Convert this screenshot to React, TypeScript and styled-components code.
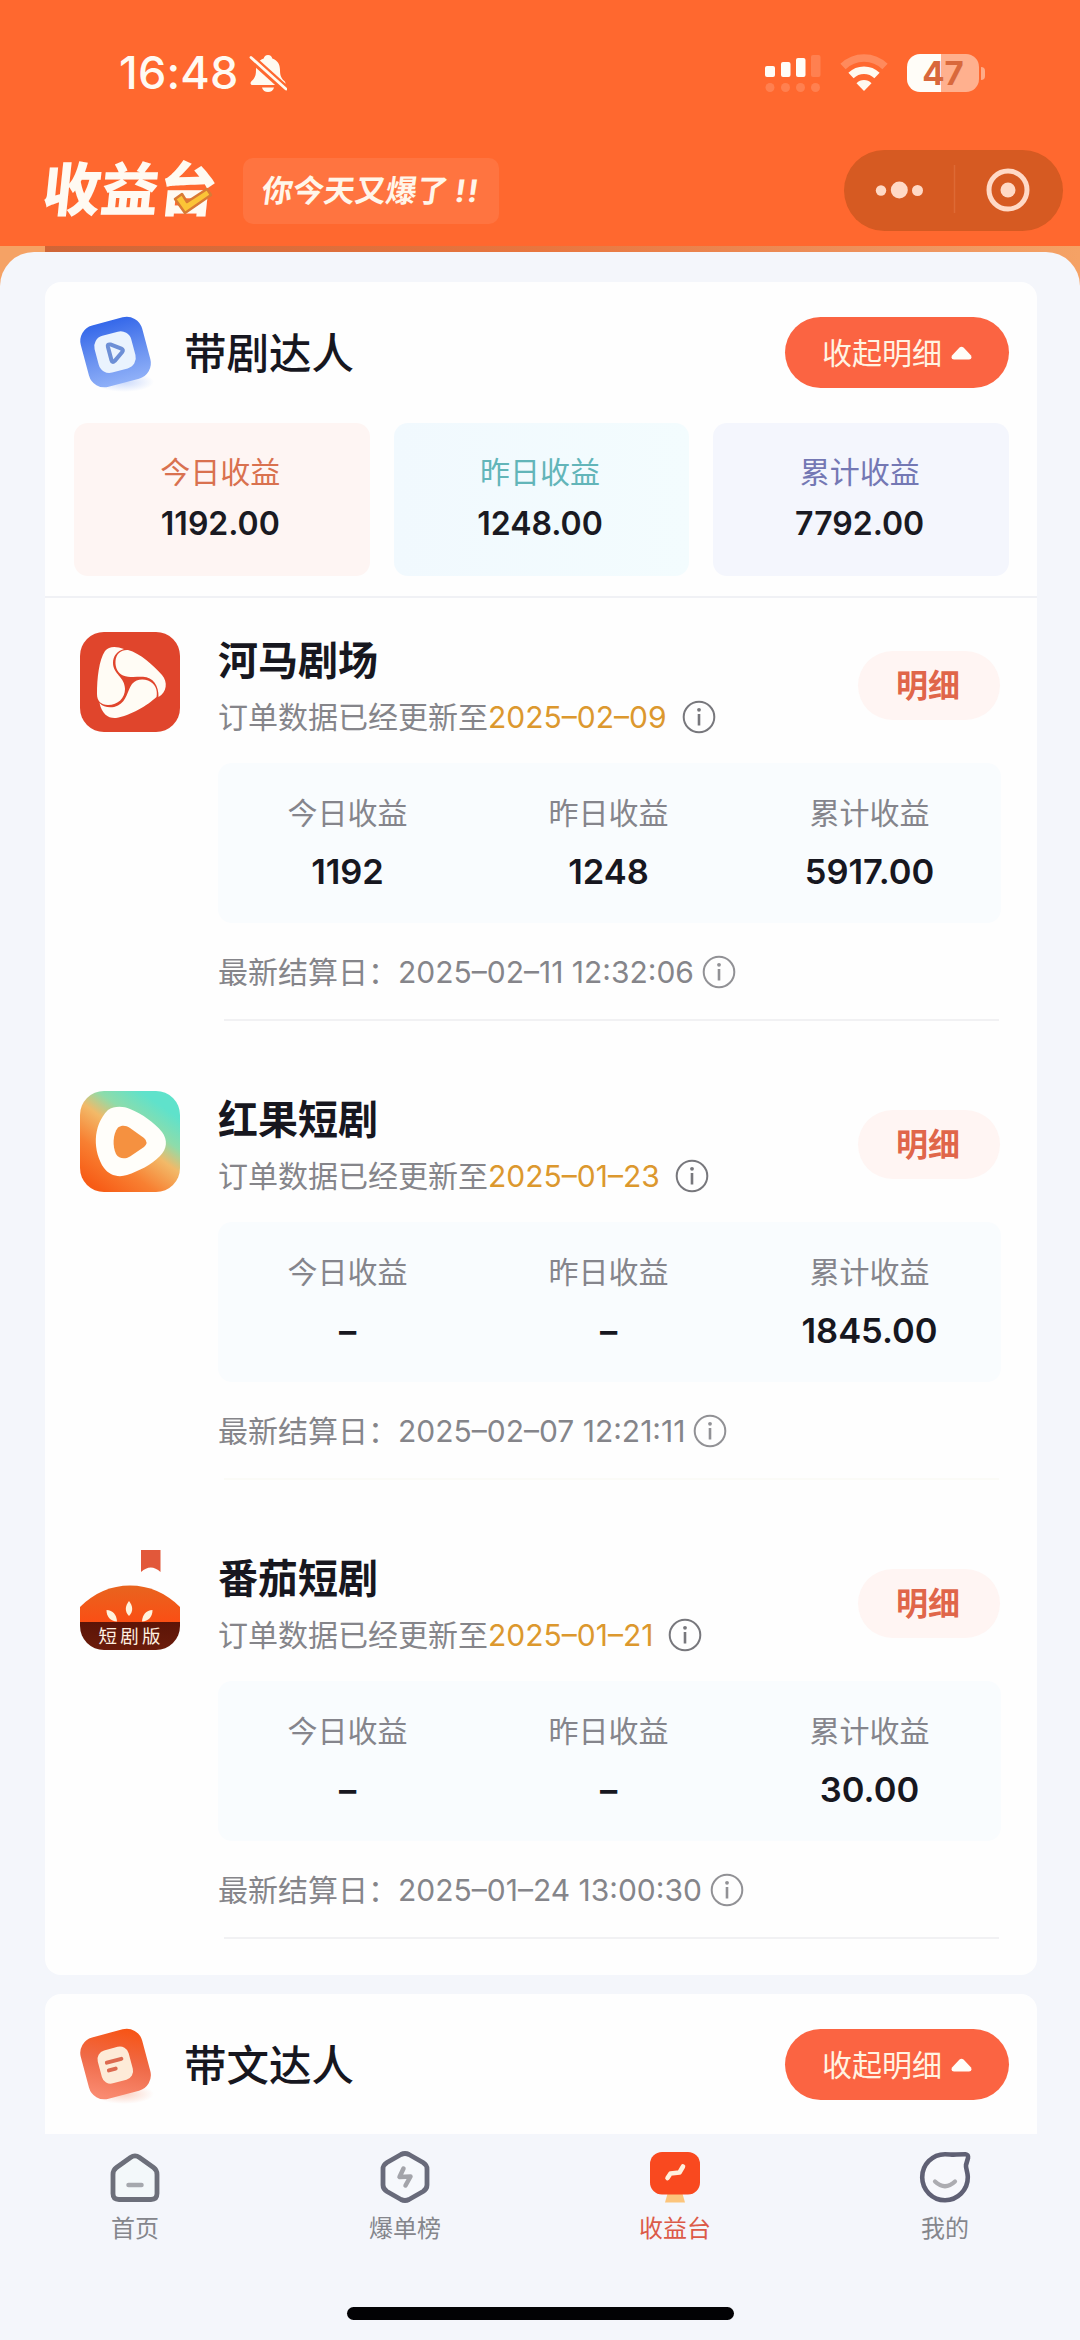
import React from "react";
import styled, { createGlobalStyle } from "styled-components";

const GlobalStyle = createGlobalStyle`
  * { box-sizing: border-box; }
  body {
    margin: 0;
    background: #f4f6fb;
    font-family: Inter, "Noto Sans CJK SC", sans-serif;
    color: #17171f;
  }
  svg { display: block; flex: none; }
`;

const Page = styled.div`
  width: 1080px;
  height: 2340px;
  display: flex;
  flex-direction: column;
  overflow: hidden;
  background: #f4f6fb;
`;

const Header = styled.header`
  height: 246px;
  flex: none;
  background: #ff682f;
`;

const StatusBar = styled.div`
  height: 150px;
  padding: 52px 95px 0 119px;
  display: flex;
  justify-content: space-between;
  align-items: flex-start;
`;

const StatusGroup = styled.div<{ $gap: number }>`
  display: flex;
  align-items: center;
  gap: ${(p) => p.$gap}px;
  height: 42px;
`;

const Clock = styled.span`
  font-size: 45px;
  line-height: 44px;
  font-weight: 500;
  color: #fffaf3;
  width: 121px;
  letter-spacing: 0.2px;
`;

const Battery = styled.div`
  display: flex;
  align-items: center;
  gap: 2px;
`;

const BatteryBody = styled.div`
  width: 72px;
  height: 38px;
  border-radius: 13px;
  display: flex;
  align-items: center;
  justify-content: center;
  background: linear-gradient(90deg, #fffdf8 47%, #ffb08e 47%);
  font-size: 33px;
  line-height: 38px;
  font-weight: 700;
  color: #d9683c;
`;

const BatteryNub = styled.div`
  width: 4px;
  height: 13px;
  border-radius: 0 5px 5px 0;
  background: #ffab87;
`;

const TitleBar = styled.div`
  height: 81px;
  padding: 0 17px 0 43px;
  display: flex;
  align-items: center;
`;

const Logo = styled.div`
  position: relative;
  width: 172px;
  font-size: 58px;
  line-height: 81px;
  font-weight: 900;
  color: #fffaf2;
  white-space: nowrap;
`;

const Slanted = styled.span<{ $angle: number }>`
  display: inline-block;
  transform: skewX(${(p) => -p.$angle}deg);
`;

const LogoCheck = styled.svg`
  position: absolute;
  left: 130px;
  top: 37px;
`;

const Slogan = styled.div`
  width: 256px;
  height: 66px;
  margin-left: 28px;
  border-radius: 10px;
  background: #ff7440;
  font-size: 31px;
  line-height: 65px;
  font-weight: 700;
  color: #fff6ea;
  text-align: center;
  white-space: nowrap;
`;

const Bang = styled.span`
  letter-spacing: 2px;
`;

const Capsule = styled.div`
  width: 219px;
  height: 81px;
  margin-left: auto;
  border-radius: 41px;
  background: #d65a22;
  display: flex;
  align-items: center;
`;

const Backdrop = styled.div`
  flex: 1;
  min-height: 0;
  padding-top: 6px;
  display: flex;
  background: linear-gradient(90deg, #f5a265 45px, #cf6537 45px, #e8763f 50%, #ee9560 85%, #f5a265 100%);
`;

const Sheet = styled.main`
  flex: 1;
  min-height: 0;
  display: flex;
  flex-direction: column;
  border-radius: 34px 34px 0 0;
  background: #f4f6fb;
  padding: 30px 43px 0 45px;
  gap: 19px;
`;

const Card = styled.section<{ $height: number; $cut?: boolean }>`
  height: ${(p) => p.$height}px;
  flex: none;
  border-radius: ${(p) => (p.$cut ? "16px 16px 0 0" : "16px")};
  background: #fefefe;
`;

const CardHead = styled.div`
  height: 141px;
  padding: 0 28px 0 29px;
  display: flex;
  align-items: center;
`;

const CardTitle = styled.h2`
  margin: 0 auto 0 28px;
  padding-top: 3px;
  font-size: 42.5px;
  line-height: 60px;
  font-weight: 500;
`;

const ToggleButton = styled.button`
  width: 224px;
  height: 71px;
  border: 0;
  padding: 0;
  border-radius: 36px;
  background: #fb6442;
  color: #fff3e2;
  font: 400 30px/70px Inter, "Noto Sans CJK SC", sans-serif;
  display: flex;
  align-items: center;
  justify-content: center;
  gap: 9px;
`;

const TileRow = styled.div`
  display: grid;
  grid-template-columns: repeat(3, 1fr);
  gap: 24px;
  padding: 0 28px 20px 29px;
  border-bottom: 2px solid #f0f1f5;
`;

const Tile = styled.div<{ $bg: string; $color: string }>`
  height: 153px;
  border-radius: 14px;
  background: ${(p) => p.$bg};
  display: flex;
  flex-direction: column;
  align-items: center;
  padding: 26px 3px 0 0;
  gap: 7px;
  color: ${(p) => p.$color};
`;

const TileLabel = styled.span`
  font-size: 30px;
  line-height: 46px;
`;

const TileValue = styled.span`
  font-size: 32px;
  line-height: 44px;
  font-weight: 600;
  color: #1a1a22;
`;

const AppItem = styled.article`
  height: 459px;
  display: grid;
  grid-template-columns: 100px 1fr;
  column-gap: 38px;
  padding: 34px 36px 0 35px;
`;

const AppBody = styled.div`
  display: flex;
  flex-direction: column;
`;

const AppTop = styled.div`
  display: flex;
  justify-content: space-between;
  height: 131px;
`;

const AppName = styled.h3`
  margin: 0;
  padding-top: 1px;
  font-size: 40px;
  line-height: 56px;
  font-weight: 700;
`;

const Line = styled.div<{ $gap: number }>`
  display: flex;
  align-items: center;
  gap: ${(p) => p.$gap}px;
  font-size: 30px;
  line-height: 44px;
  color: #85858a;
  white-space: nowrap;
`;

const SubLine = styled(Line)`
  margin-top: 6px;
`;

const DateText = styled.span`
  color: #dc982e;
`;

const DetailButton = styled.button`
  width: 142px;
  height: 69px;
  margin: 19px 1px 0 0;
  padding: 0 2px 0 0;
  border: 0;
  border-radius: 35px;
  background: #fff5f3;
  color: #e0664a;
  font: 700 32px/69px Inter, "Noto Sans CJK SC", sans-serif;
`;

const StatBox = styled.div`
  height: 160px;
  border-radius: 14px;
  background: #f9fcfe;
  display: grid;
  grid-template-columns: repeat(3, 1fr);
`;

const Stat = styled.div`
  display: flex;
  flex-direction: column;
  align-items: center;
  padding: 27px 2px 0 0;
  gap: 13px;
`;

const StatLabel = styled.span`
  font-size: 30px;
  line-height: 46px;
  color: #85858c;
`;

const StatValue = styled.span`
  font-size: 34.5px;
  line-height: 46px;
  font-weight: 600;
`;

const Settle = styled(Line)`
  margin-top: 27px;
  height: 44px;
`;

const Rule = styled.div<{ $faint?: boolean }>`
  height: 2px;
  margin: 25px 2px 0 6px;
  background: ${(p) => (p.$faint ? "#fbfbf7" : "#f1f1f3")};
`;

const TabBar = styled.nav`
  height: 206px;
  flex: none;
  background: #f4f6fb;
  display: flex;
  flex-direction: column;
  align-items: center;
  justify-content: space-between;
  padding-bottom: 20px;
`;

const Tabs = styled.div`
  width: 100%;
  display: grid;
  grid-template-columns: repeat(4, 1fr);
`;

const Tab = styled.div<{ $active?: boolean }>`
  display: flex;
  flex-direction: column;
  align-items: center;
  padding-top: 16px;
  gap: 7px;
  font-size: 24px;
  line-height: 36px;
  color: ${(p) => (p.$active ? "#dc5a48" : "#85868c")};
`;

const HomeIndicator = styled.div`
  width: 387px;
  height: 13px;
  border-radius: 7px;
  background: #020204;
`;

const BellOff = () => (
  <svg width="38" height="39" viewBox="0 0 38 39">
    <path
      d="M19 1c-2.4 0-4 1.500-4.300 3.600C9.500 6.200 7 10.600 7 16c0 6-1.500 8.500-4.600 11.300-1.500 1.500-1 3.700 1.200 3.700h30.800c2.200 0 2.700-2.200 1.200-3.700C32.500 24.500 31 22 31 16c0-5.400-2.500-9.800-7.700-11.400C23 2.500 21.400 1 19 1z"
      fill="#fffaf0"
    />
    <path d="M13 33.500h12c-.8 3-3 4.500-6 4.500s-5.200-1.500-6-4.500z" fill="#fffaf0" />
    <path d="M1.500 3.500l35 31.500" stroke="#ff682f" strokeWidth="8" />
    <path d="M2 3.500l35 31.500" stroke="#fffaf0" strokeWidth="2.800" strokeLinecap="round" />
  </svg>
);

const Signal = () => (
  <svg width="56" height="38" viewBox="0 0 56 38">
    <g fill="#fffdf8">
      <rect x="0" y="12" width="10" height="11" rx="2" />
      <rect x="16" y="8" width="9.500" height="15" rx="2" />
      <rect x="31" y="4" width="9.500" height="19" rx="2" />
    </g>
    <g fill="#ff8050">
      <rect x="46" y="1" width="9.500" height="22" rx="2" />
      <circle cx="5" cy="33.500" r="4.500" />
      <circle cx="20.500" cy="33.500" r="4.500" />
      <circle cx="35.500" cy="33.500" r="4.500" />
      <circle cx="50.500" cy="33.500" r="4.500" />
    </g>
  </svg>
);

const Wifi = () => (
  <svg width="48" height="38" viewBox="0 0 48 38">
    <path d="M3 12.500a30 30 0 0 1 42 0" fill="none" stroke="#ff8a5c" strokeWidth="7.500" />
    <path d="M11 21.500a18.500 18.500 0 0 1 26 0" fill="none" stroke="#fffaf0" strokeWidth="7.500" />
    <path d="M24 37l-7.500-7.800a10.500 10.500 0 0 1 15 0z" fill="#fffaf0" />
  </svg>
);

const CapsuleIcons = () => (
  <svg width="219" height="81" viewBox="0 0 219 81">
    <g fill="#ffd9c6">
      <circle cx="37" cy="40.500" r="5.200" />
      <circle cx="55.300" cy="40" r="8.500" />
      <circle cx="73.500" cy="40.500" r="5.500" />
      <circle cx="164" cy="40" r="7.500" />
    </g>
    <path d="M110.500 15v48" stroke="#dd6a35" strokeWidth="1.500" />
    <circle cx="164" cy="40" r="19" fill="none" stroke="#ffd9c6" strokeWidth="5" />
  </svg>
);

const CaretUp = () => (
  <svg width="21" height="14" viewBox="0 0 21 14">
    <path d="M8.500 1.500Q10.500-.2 12.500 1.500L20 9.500Q21.500 13.500 18 13.500H3Q-.5 13.500 1 9.500z" fill="#fffdf8" />
  </svg>
);

const PlayBadge = () => (
  <svg width="82" height="82" viewBox="0 0 82 82">
    <defs>
      <linearGradient id="blueFill" x1="0" y1="0" x2="0" y2="1">
        <stop offset="0" stopColor="#3568ea" />
        <stop offset="0.550" stopColor="#6a92f0" />
        <stop offset="1" stopColor="#8fb0f8" />
      </linearGradient>
      <radialGradient id="blueShade">
        <stop offset="0" stopColor="#cbdafb" />
        <stop offset="1" stopColor="#cbdafb" stopOpacity="0" />
      </radialGradient>
    </defs>
    <ellipse cx="50" cy="70" rx="30" ry="10" fill="url(#blueShade)" />
    <g transform="rotate(-15 41.500 40)">
      <rect x="9.800" y="8.300" width="63.500" height="63.500" rx="16" fill="url(#blueFill)" />
      <rect x="22" y="21" width="38" height="38" rx="11" fill="#eaf3fe" />
      <path d="M35.500 33q0-3 3-1.600l9.500 6.800q2.200 1.800 0 3.600l-9.500 6.600q-3 1.600-3-1.600z" fill="none" stroke="#6d8fd6" strokeWidth="4" strokeLinejoin="round" />
    </g>
  </svg>
);

const ArticleBadge = () => (
  <svg width="82" height="82" viewBox="0 0 82 82">
    <defs>
      <linearGradient id="redFill" x1="0.800" y1="0" x2="0.300" y2="1">
        <stop offset="0" stopColor="#f75414" />
        <stop offset="0.500" stopColor="#ef6a48" />
        <stop offset="1" stopColor="#f98a70" />
      </linearGradient>
      <radialGradient id="redShade">
        <stop offset="0" stopColor="#fbd3c5" />
        <stop offset="1" stopColor="#fbd3c5" stopOpacity="0" />
      </radialGradient>
    </defs>
    <ellipse cx="50" cy="70" rx="30" ry="10" fill="url(#redShade)" />
    <g transform="rotate(-15 41.500 40)">
      <rect x="9.800" y="8.300" width="63.500" height="63.500" rx="16" fill="url(#redFill)" />
      <rect x="25" y="24" width="32" height="34" rx="9" fill="#fdebd8" />
      <path d="M33.500 36.500h15M33.500 44.500h7" stroke="#dc6a50" strokeWidth="4" strokeLinecap="round" />
    </g>
  </svg>
);

const HemaIcon = () => (
  <svg width="100" height="100" viewBox="0 0 100 100">
    <rect width="100" height="100" rx="24" fill="#e0452c" />
    <g fill="#fffcf5">
      <path d="M44 17C36 14 29 14 25 19C19 28 17 46 17 62C17 69 21 73 28 73C38 73 45 66 45 57C45 45 33 42 33 31C33 24 37 19 44 17Z" />
      <path d="M35.500 29C36 22 41 17.500 48 18C60 21 74 34 82 43C88 50 87 60 78.500 65C79 54 73 45 63 44.800C57 44.500 50 46 43 43.500C38 41 35 36 35.500 29Z" />
      <path d="M19.500 71C24 76 32 76.500 38 73.500C47 69 47 59 52 52C56 47.500 62 46.500 68 48.500C75 51 78 58 76.500 65C68 73 50 84 36 86C28 86.500 22 82 19.500 71Z" />
    </g>
  </svg>
);

const HongguoIcon = () => (
  <svg width="100" height="101" viewBox="0 0 100 101">
    <defs>
      <linearGradient id="hgFill" x1="0.220" y1="1" x2="0.820" y2="0.150">
        <stop offset="0" stopColor="#f75c16" />
        <stop offset="0.300" stopColor="#f88032" />
        <stop offset="0.580" stopColor="#f2b968" />
        <stop offset="0.760" stopColor="#8edcaa" />
        <stop offset="1" stopColor="#5fe2cb" />
      </linearGradient>
    </defs>
    <rect width="100" height="101" rx="24" fill="url(#hgFill)" />
    <path d="M28 19C34 15 43 15 50 18C62 23 74 31 82 41C88 49 87 58 80 65C71 74 59 80 47 84C38 87 29 84 24 77C13 61 12 35 28 19Z" fill="#fffefa" />
    <path d="M38 36.500C42 34 46 34.500 50 37L64 47Q69 51.500 64 56L50 65.500C45 68.500 39 68 36 63C32.500 56 32.500 43 38 36.500Z" fill="#f59140" />
  </svg>
);

const TomatoLabel = styled.text`
  font: 400 18.5px "Noto Sans CJK SC", sans-serif;
  letter-spacing: 3.3px;
`;

const FanqieIcon = () => (
  <svg width="100" height="100" viewBox="0 0 100 100">
    <defs>
      <linearGradient id="fqFill" x1="0" y1="0" x2="0" y2="1">
        <stop offset="0" stopColor="#e8641f" />
        <stop offset="1" stopColor="#fb4e14" />
      </linearGradient>
      <linearGradient id="fqBand" x1="0" y1="0" x2="0" y2="1">
        <stop offset="0" stopColor="#5c1407" />
        <stop offset="1" stopColor="#6b1c0b" />
      </linearGradient>
    </defs>
    <path d="M61 0h19.500v22q-9.700-9-19.500 0z" fill="#e2583a" />
    <path d="M0 57C14 43 31 35.500 50 35.500S86 43 100 57V73H0z" fill="url(#fqFill)" />
    <path d="M0 72h100v4a24 24 0 0 1-24 24H24A24 24 0 0 1 0 76z" fill="url(#fqBand)" />
    <g fill="#fff3dd">
      <path d="M49 51c4 5 4.500 10.500 0 15c-4.500-4.500-4-10 0-15z" />
      <path d="M26.500 60c6.500.5 10 4.500 10.500 11.500c-6.500-.5-10.500-4.500-10.500-11.500z" />
      <path d="M72.500 60c-6.500.5-10 4.500-10.500 11.500c6.500-.5 10.500-4.500 10.500-11.500z" />
    </g>
    <TomatoLabel x="18.500" y="93" fill="#fff0e0">短剧版</TomatoLabel>
  </svg>
);

const InfoIcon = ({ color }: { color: string }) => (
  <svg width="34" height="34" viewBox="0 0 34 34">
    <circle cx="17" cy="17" r="15.300" fill="none" stroke={color} strokeWidth="2" />
    <path d="M17 14v11.500" stroke={color} strokeWidth="2.600" />
    <circle cx="17" cy="9.800" r="1.900" fill={color} />
  </svg>
);

const HomeIcon = () => (
  <svg width="52" height="54" viewBox="0 0 52 54">
    <path
      d="M21.500 7.500Q26 4.300 30.500 7.500L44.500 17.500Q48 20 48 24.500V43.500Q48 49.500 42 49.500H10Q4 49.500 4 43.500V24.500Q4 20 7.500 17.500z"
      fill="#f3f8fa" stroke="#6c6f7a" strokeWidth="4.800"
    />
    <path d="M19.500 35h13" stroke="#a5a8ae" strokeWidth="4.500" strokeLinecap="round" />
  </svg>
);

const RankIcon = () => (
  <svg width="52" height="54" viewBox="0 0 52 54">
    <path
      d="M22 4.500Q26 2.500 30 4.500L44 12.500Q48 15 48 19V35Q48 39 44 41.500L30 49.500Q26 51.500 22 49.500L8 41.500Q4 39 4 35V19Q4 15 8 12.500z"
      fill="#f6f8fc" stroke="#686a7a" strokeWidth="4.800"
    />
    <path d="M24.500 18.500L20.500 27L31.500 26.500L26.500 35.500" fill="none" stroke="#a3a4aa" strokeWidth="4.500" strokeLinecap="round" strokeLinejoin="round" />
  </svg>
);

const IncomeIcon = () => (
  <svg width="52" height="54" viewBox="0 0 52 54">
    <path d="M19 42h14l3 10.500H16z" fill="#fcc57c" />
    <rect x="1" y="2" width="50" height="42.500" rx="12" fill="#f9491f" />
    <path d="M18.500 28L21.500 23.500L30.500 22.500L34 16.500" fill="none" stroke="#fff0dd" strokeWidth="4.600" strokeLinecap="round" strokeLinejoin="round" />
  </svg>
);

const MeIcon = () => (
  <svg width="52" height="54" viewBox="0 0 52 54">
    <path
      d="M26 4.200C31 4.200 33 5 37 4.500L46.500 4.200Q49.500 4.500 49 8L47 15C46.500 18 48.800 22 48.800 27A22.800 23 0 1 1 26 4.200z"
      fill="#f7f8fc" stroke="#5f6074" strokeWidth="4.600" strokeLinejoin="round"
    />
    <path d="M16 31.500Q26 41 36 31.500" fill="none" stroke="#acacb1" strokeWidth="4.200" strokeLinecap="round" />
  </svg>
);

interface AppInfo {
  name: string;
  icon: React.ReactNode;
  updated: string;
  today: string;
  yesterday: string;
  total: string;
  settled: string;
  faintRule?: boolean;
}

const apps: AppInfo[] = [
  { name: "河马剧场", icon: <HemaIcon />, updated: "2025–02–09", today: "1192", yesterday: "1248", total: "5917.00", settled: "2025–02–11 12:32:06" },
  { name: "红果短剧", icon: <HongguoIcon />, updated: "2025–01–23", today: "–", yesterday: "–", total: "1845.00", settled: "2025–02–07 12:21:11", faintRule: true },
  { name: "番茄短剧", icon: <FanqieIcon />, updated: "2025–01–21", today: "–", yesterday: "–", total: "30.00", settled: "2025–01–24 13:00:30" },
];

const tiles = [
  { label: "今日收益", value: "1192.00", bg: "#fef5f3", color: "#d9714f" },
  { label: "昨日收益", value: "1248.00", bg: "linear-gradient(90deg, #f1f9fe, #f3fcfe)", color: "#62b5b9" },
  { label: "累计收益", value: "7792.00", bg: "#f4f6fd", color: "#7478b4" },
];

const Collapse = () => (
  <ToggleButton>
    收起明细
    <CaretUp />
  </ToggleButton>
);

const AppSection = ({ app }: { app: AppInfo }) => (
  <AppItem>
    {app.icon}
    <AppBody>
      <AppTop>
        <div>
          <AppName>{app.name}</AppName>
          <SubLine $gap={15}>
            <span>
              订单数据已经更新至<DateText>{app.updated}</DateText>
            </span>
            <InfoIcon color="#77777c" />
          </SubLine>
        </div>
        <DetailButton>明细</DetailButton>
      </AppTop>
      <StatBox>
        <Stat>
          <StatLabel>今日收益</StatLabel>
          <StatValue>{app.today}</StatValue>
        </Stat>
        <Stat>
          <StatLabel>昨日收益</StatLabel>
          <StatValue>{app.yesterday}</StatValue>
        </Stat>
        <Stat>
          <StatLabel>累计收益</StatLabel>
          <StatValue>{app.total}</StatValue>
        </Stat>
      </StatBox>
      <Settle $gap={8}>
        <span>最新结算日：{app.settled}</span>
        <InfoIcon color="#919195" />
      </Settle>
      <Rule $faint={app.faintRule} />
    </AppBody>
  </AppItem>
);

export default function App() {
  return (
    <Page>
      <GlobalStyle />
      <Header>
        <StatusBar>
          <StatusGroup $gap={9}>
            <Clock>16:48</Clock>
            <BellOff />
          </StatusGroup>
          <StatusGroup $gap={19}>
            <Signal />
            <Wifi />
            <Battery>
              <BatteryBody>47</BatteryBody>
              <BatteryNub />
            </Battery>
          </StatusGroup>
        </StatusBar>
        <TitleBar>
          <Logo>
            <Slanted $angle={6}>收益台</Slanted>
            <LogoCheck width="40" height="28" viewBox="0 0 40 28">
              <path d="M2 12l7-5 5 8L34 2l4 6L12 26z" fill="#fbc437" stroke="#d97a34" strokeWidth="2.500" strokeLinejoin="round" />
            </LogoCheck>
          </Logo>
          <Slogan>
            <Slanted $angle={8}>
              你今天又爆了 <Bang>!!</Bang>
            </Slanted>
          </Slogan>
          <Capsule>
            <CapsuleIcons />
          </Capsule>
        </TitleBar>
      </Header>
      <Backdrop>
        <Sheet>
          <Card $height={1693}>
            <CardHead>
              <PlayBadge />
              <CardTitle>带剧达人</CardTitle>
              <Collapse />
            </CardHead>
            <TileRow>
              {tiles.map((t) => (
                <Tile key={t.label} $bg={t.bg} $color={t.color}>
                  <TileLabel>{t.label}</TileLabel>
                  <TileValue>{t.value}</TileValue>
                </Tile>
              ))}
            </TileRow>
            {apps.map((a) => (
              <AppSection key={a.name} app={a} />
            ))}
          </Card>
          <Card $height={140} $cut>
            <CardHead>
              <ArticleBadge />
              <CardTitle>带文达人</CardTitle>
              <Collapse />
            </CardHead>
          </Card>
        </Sheet>
      </Backdrop>
      <TabBar>
        <Tabs>
          <Tab><HomeIcon />首页</Tab>
          <Tab><RankIcon />爆单榜</Tab>
          <Tab $active><IncomeIcon />收益台</Tab>
          <Tab><MeIcon />我的</Tab>
        </Tabs>
        <HomeIndicator />
      </TabBar>
    </Page>
  );
}
